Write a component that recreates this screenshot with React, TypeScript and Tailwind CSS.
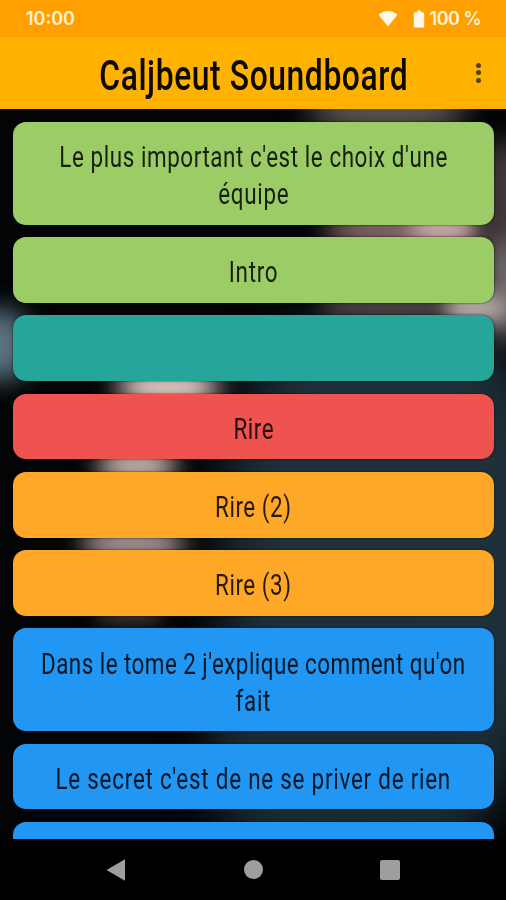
import clsx from 'clsx';

interface Line {
  text: string;
  tracking: string;
}

interface Sound {
  id: number;
  color: string;
  lines: Line[];
}

const GREEN = 'bg-[#9ccc65]';
const TEAL = 'bg-[#26a69a]';
const RED = 'bg-[#ef5350]';
const ORANGE = 'bg-[#ffa726]';
const BLUE = 'bg-[#2196f3]';

const SOUNDS: Sound[] = [
  {
    id: 1,
    color: GREEN,
    lines: [
      { text: "Le plus important c'est le choix d'une", tracking: 'tracking-[0.75px]' },
      { text: 'équipe', tracking: 'tracking-[0.9px]' },
    ],
  },
  { id: 2, color: GREEN, lines: [{ text: 'Intro', tracking: 'tracking-[0.9px]' }] },
  { id: 3, color: TEAL, lines: [] },
  { id: 4, color: RED, lines: [{ text: 'Rire', tracking: 'tracking-[0.7px]' }] },
  { id: 5, color: ORANGE, lines: [{ text: 'Rire (2)', tracking: 'tracking-[0.7px]' }] },
  { id: 6, color: ORANGE, lines: [{ text: 'Rire (3)', tracking: 'tracking-[0.7px]' }] },
  {
    id: 7,
    color: BLUE,
    lines: [
      { text: "Dans le tome 2 j'explique comment qu'on", tracking: 'tracking-[0.6px]' },
      { text: 'fait', tracking: 'tracking-[0.9px]' },
    ],
  },
  { id: 8, color: BLUE, lines: [{ text: "Le secret c'est de ne se priver de rien", tracking: 'tracking-[1px]' }] },
  { id: 9, color: BLUE, lines: [] },
];

// Out of focus photo behind the list
const BLOBS = [
  'left-[225px] top-[205px] w-[330px] h-[500px] bg-[#1e303a] blur-[26px]',
  'left-[210px] top-[560px] w-[280px] h-[190px] bg-[#1b2b32] blur-[22px]',
  'left-[310px] top-[-18px] w-[155px] h-[38px] bg-[#6a6260] blur-[15px]',
  'left-[325px] top-[108px] w-[165px] h-[26px] bg-[#a98484] blur-[12px]',
  'left-[410px] top-[107px] w-[65px] h-[24px] bg-[#d8b4b4] blur-[10px]',
  'left-[485px] top-[30px] w-[40px] h-[120px] bg-[#453c40] blur-[12px]',
  'left-[490px] top-[130px] w-[30px] h-[100px] bg-[#8a8080] blur-[12px]',
  'left-[320px] top-[186px] w-[150px] h-[22px] bg-[#5d4b4b] blur-[10px]',
  'left-[445px] top-[184px] w-[60px] h-[30px] bg-[#b9aeab] blur-[9px]',
  'left-[-26px] top-[200px] w-[54px] h-[72px] bg-[#5d7482] blur-[13px]',
  'left-[118px] top-[259px] w-[100px] h-[38px] bg-[#ecd6ce] blur-[13px]',
  'left-[98px] top-[340px] w-[78px] h-[33px] bg-[#d3c0b8] blur-[12px]',
  'left-[82px] top-[419px] w-[102px] h-[31px] bg-[#bba5a5] blur-[12px]',
  'left-[95px] top-[492px] w-[70px] h-[22px] bg-[#4a3d3b] blur-[10px]',
];

function Backdrop() {
  return (
    <div className="absolute inset-0 overflow-hidden bg-[#020406]">
      {BLOBS.map(b => (
        <div key={b} className={clsx('absolute rounded-[40%]', b)} />
      ))}
    </div>
  );
}

function StatusBar() {
  return (
    <div className="flex h-[37px] shrink-0 items-center bg-[#ffa000] pl-[26px] pr-[25px] font-['Inter',sans-serif] text-[18px] font-semibold text-[#fff3dc]">
      <span>10:00</span>
      <svg className="ml-auto" width="20" height="17" viewBox="0 0 20 17" fill="#fff8ea">
        <path d="M10 16.5 0.5 4.7C3 2.2 6.3 0.9 10 0.9s7 1.3 9.5 3.8z" />
      </svg>
      <svg className="ml-[15px]" width="12" height="18" viewBox="0 0 12 18" fill="#fff8ea">
        <path d="M4 0.5h4v1.7h2.2a1 1 0 0 1 1 1V16.5a1 1 0 0 1-1 1H1.8a1 1 0 0 1-1-1V3.2a1 1 0 0 1 1-1H4z" />
      </svg>
      <span className="ml-[5px] tracking-[-0.5px]">100 %</span>
    </div>
  );
}

function AppBar() {
  return (
    <header className="flex h-[71.5px] shrink-0 items-center bg-[#ffb300]">
      <div className="w-[58px]" />
      <h1 className="flex flex-1 justify-center pt-[5px] text-[43px] leading-none font-medium tracking-[0.8px] whitespace-nowrap text-[#0c0a00]">
        <span className="flex w-0 justify-center">
          <span className="scale-x-[0.74]">Caljbeut Soundboard</span>
        </span>
      </h1>
      <button className="flex w-[56px] flex-col items-center gap-[2.7px]" aria-label="Menu">
        <span className="size-[5px] rounded-full bg-[#5a3f00]" />
        <span className="size-[5px] rounded-full bg-[#5a3f00]" />
        <span className="size-[5px] rounded-full bg-[#5a3f00]" />
      </button>
    </header>
  );
}

function SoundButton({ sound }: { sound: Sound }) {
  return (
    <button
      className={clsx(
        'flex min-h-[65.6px] w-full shrink-0 flex-col items-center justify-center rounded-[13px] pt-[17.2px] pb-[11.2px]',
        'text-[29.5px] leading-[37.1px] font-normal text-black/85 shadow-[0_0_2px_rgba(0,0,0,0.8)]',
        sound.color,
      )}
    >
      {sound.lines.map(line => (
        <span key={line.text} className="flex w-0 justify-center whitespace-nowrap">
          <span className={clsx('scale-x-[0.76]', line.tracking)}>{line.text}</span>
        </span>
      ))}
    </button>
  );
}

function NavBar() {
  return (
    <nav className="flex h-[61px] shrink-0 items-center justify-between bg-black pl-[106px] pr-[106px] text-[#9e9e9e]">
      <svg width="20" height="22" viewBox="0 0 20 22" fill="currentColor">
        <path d="M0.5 11 19 0.3v21.4z" />
      </svg>
      <div className="size-[19px] rounded-full bg-current" />
      <div className="size-5 rounded-[2px] bg-current" />
    </nav>
  );
}

export default function App() {
  return (
    <div className="flex h-[900px] w-[506px] flex-col overflow-hidden bg-black font-['Roboto',sans-serif]">
      <StatusBar />
      <AppBar />
      <main className="relative min-h-0 flex-1 overflow-hidden">
        <Backdrop />
        <div className="relative flex flex-col gap-[12.65px] pt-[13.5px] pr-[12px] pl-[13px]">
          {SOUNDS.map(s => <SoundButton key={s.id} sound={s} />)}
        </div>
      </main>
      <NavBar />
    </div>
  );
}
